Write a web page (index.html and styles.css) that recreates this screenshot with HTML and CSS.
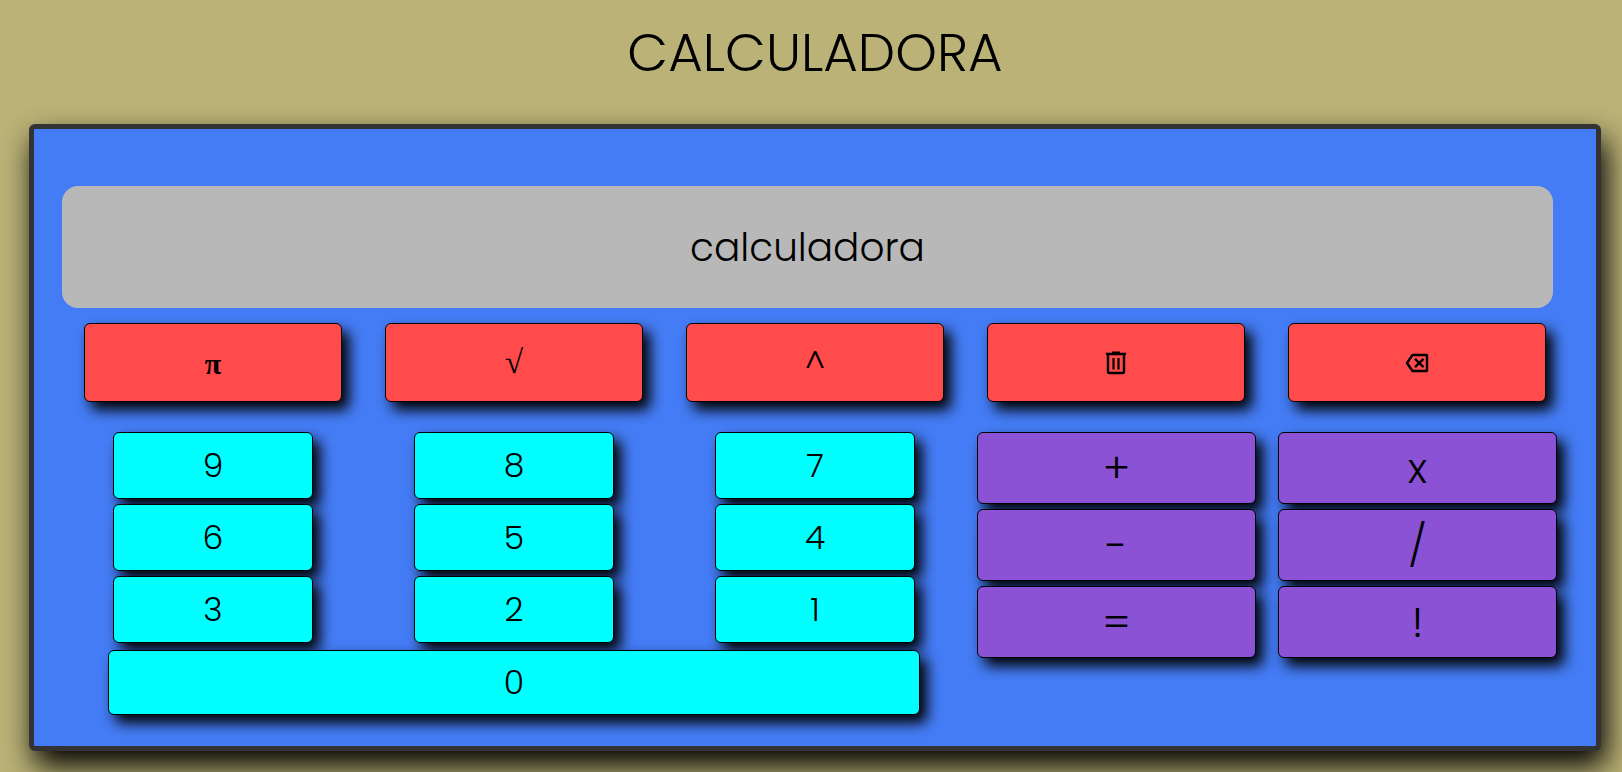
FILE: index.html
```
<!DOCTYPE html>
<html lang="es">
<head>
<meta charset="utf-8">
<title>Calculadora</title>
<link rel="stylesheet" href="styles.css">
</head>
<body>
<h1 class="title">CALCULADORA</h1>
<main class="panel">
  <output class="display">calculadora</output>
  <div class="functions">
    <button class="key key-fn key-pi" type="button">π</button>
    <button class="key key-fn key-root" type="button">√</button>
    <button class="key key-fn key-power" type="button">^</button>
    <button class="key key-fn" type="button" aria-label="Borrar todo">
      <svg class="icon" viewBox="0 0 24 24" fill="none" stroke="currentColor" stroke-width="2.400"><path d="M4 4V20.500A1.500 1.500 0 0 0 5.500 22H18.500A1.500 1.500 0 0 0 20 20.500V4M2 3H22M8 1.800H16"/><path stroke-width="2.200" d="M9.500 7V18.500M14.500 7V18.500"/></svg>
    </button>
    <button class="key key-fn" type="button" aria-label="Retroceso">
      <svg class="icon" viewBox="0 0 24 24" fill="none" stroke="currentColor" stroke-width="2.400" stroke-linejoin="round"><path d="M7.500 4H21.500Q22 4 22 4.500V19.500Q22 20 21.500 20H7.500L2 12Z"/><path d="M10 7.800L18.500 16.200M18.500 7.800L10 16.200"/></svg>
    </button>
  </div>
  <div class="keypad">
    <div class="numbers">
      <button class="key key-num" type="button">9</button>
      <button class="key key-num" type="button">8</button>
      <button class="key key-num" type="button">7</button>
      <button class="key key-num" type="button">6</button>
      <button class="key key-num" type="button">5</button>
      <button class="key key-num" type="button">4</button>
      <button class="key key-num" type="button">3</button>
      <button class="key key-num" type="button">2</button>
      <button class="key key-num" type="button">1</button>
      <button class="key key-num key-zero" type="button">0</button>
    </div>
    <div class="operators">
      <button class="key key-op" type="button">+</button>
      <button class="key key-op" type="button">x</button>
      <button class="key key-op" type="button">-</button>
      <button class="key key-op" type="button">/</button>
      <button class="key key-op" type="button">=</button>
      <button class="key key-op" type="button">!</button>
    </div>
  </div>
</main>
</body>
</html>
```
FILE: styles.css
```
* {
  box-sizing: border-box;
}

body {
  margin: 0;
  background: #bbb277;
  color: #000;
  font-family: Poppins, Inter, "Liberation Sans", sans-serif;
  font-weight: 300;
}

.title {
  margin: 0;
  padding: 21px 0 39px 8px;
  font-size: 53px;
  line-height: 64px;
  font-weight: 300;
  text-align: center;
}

.panel {
  margin: 0 21px 21px 29px;
  padding: 57px 28px 31px;
  border: 5px solid #333;
  border-radius: 6px;
  background: #447cf5;
  box-shadow: 5px 15px 30px #000;
}

.display {
  display: flex;
  align-items: center;
  justify-content: center;
  height: 122px;
  margin-right: 15px;
  border-radius: 16px;
  background: #b8b8b8;
  font-size: 39px;
}

.functions,
.keypad {
  display: grid;
  margin-left: 1px;
}

.functions {
  grid-template-columns: repeat(5, 1fr);
  margin-top: 15px;
}

.keypad {
  grid-template-columns: 3fr 2fr;
  align-items: start;
  margin-top: 30px;
}

.numbers {
  display: grid;
  grid-template-columns: repeat(3, 1fr);
  row-gap: 5px;
}

.operators {
  display: grid;
  grid-template-columns: repeat(2, 1fr);
  row-gap: 5px;
}

.key {
  display: flex;
  align-items: center;
  justify-content: center;
  padding: 0;
  border: 1px solid #000;
  border-radius: 6px;
  box-shadow: 7px 8px 14px #000;
  color: #000;
  font-family: inherit;
  font-weight: 300;
  font-size: 33px;
  cursor: pointer;
}

.key-fn {
  height: 79px;
  margin: 0 22px 0 21px;
  background: #ff4b4b;
}

.key-pi,
.key-root {
  font-family: "Liberation Serif", serif;
}

.key-pi {
  padding-top: 3px;
  font-weight: 700;
  font-size: 30px;
}

.key-num {
  height: 67px;
  margin: 0 51px 0 50px;
  background: #0ff;
}

.key-zero {
  grid-column: 1 / -1;
  height: 65px;
  margin: 2px 46px 0 45px;
}

.key-op {
  height: 72px;
  margin: 0 11px;
  background: #8b52d6;
  font-size: 42px;
}

.icon {
  width: 24px;
  height: 24px;
}
```
